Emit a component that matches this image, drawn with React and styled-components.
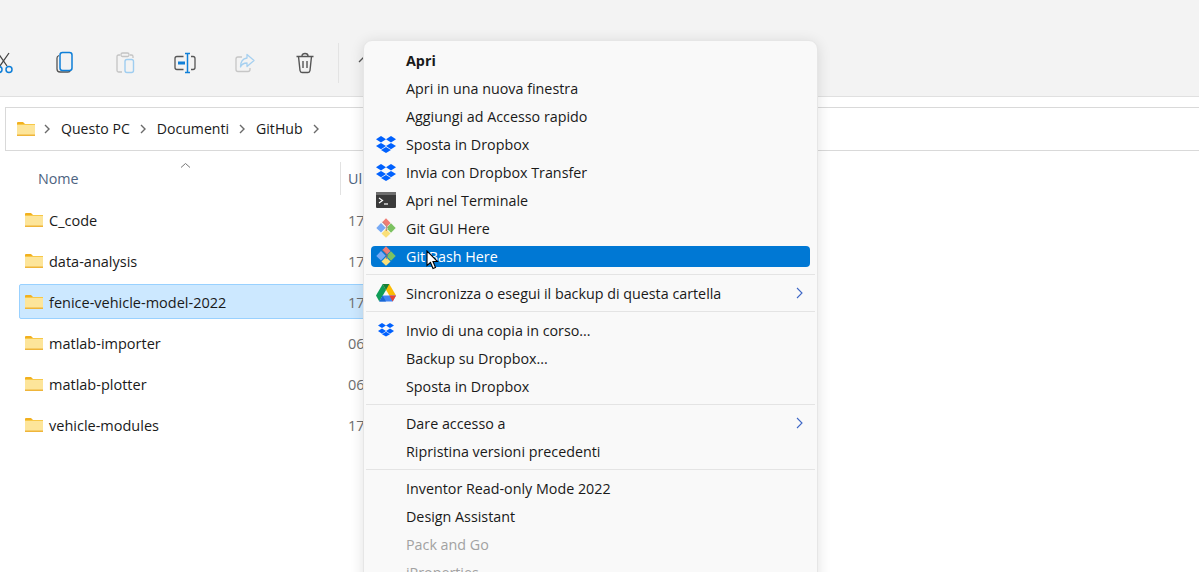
import React from "react";
import styled, { createGlobalStyle } from "styled-components";

const Global = createGlobalStyle`
  html, body { margin: 0; padding: 0; background: #fff; }
  body { font-family: "Open Sans", "Noto Sans", sans-serif; overflow: hidden; }
`;

const Page = styled.div`
  position: relative;
  width: 1199px;
  height: 572px;
  overflow: hidden;
  background: #fff;
  font-size: 14.3px;
  color: #1a1a1a;
`;

const Toolbar = styled.div`
  display: flex;
  align-items: center;
  height: 97px;
  padding-top: 30px;
  box-sizing: border-box;
  background: #f3f3f3;
  border-bottom: 1px solid #e0e0e0;
  margin-bottom: 10px;
`;

const ToolButton = styled.div`
  flex: 0 0 60px;
  width: 60px;
  height: 24px;
  display: flex;
  justify-content: center;
  margin-left: ${({ $first }) => ($first ? "-25px" : "0")};
`;

const ToolDivider = styled.div`
  width: 1px;
  height: 40px;
  margin: 0 19px 0 3px;
  background: #e3e3e3;
`;

const MoreMark = styled.svg`
  margin-bottom: 7px;
`;

const AddressBar = styled.div`
  display: flex;
  align-items: center;
  height: 44px;
  width: 1300px;
  margin-left: 5px;
  padding-left: 11px;
  box-sizing: border-box;
  border: 1px solid #d9d9d9;
  font-size: 14.1px;
`;

const Crumb = styled.span`
  white-space: nowrap;
  margin-bottom: 2px;
`;

const ChevronWrap = styled.span`
  display: flex;
  width: 8px;
  margin: ${({ $m }) => $m || "0 10px 0 9px"};
`;

const HeaderRow = styled.div`
  position: relative;
  display: flex;
  align-items: center;
  height: 44px;
  margin-top: 5px;
  margin-bottom: 2px;
  color: #4d6380;
`;

const HeaderName = styled.div`
  width: 340px;
  padding-left: 38px;
  box-sizing: border-box;
  position: relative;
`;

const SortMark = styled.span`
  position: absolute;
  left: 180px;
  top: -7px;
  display: flex;
`;

const HeaderDivider = styled.div`
  width: 1px;
  height: 33px;
  margin-right: 7px;
  background: #e2e2e2;
`;

const FileList = styled.div`
  display: flex;
  flex-direction: column;
  gap: 6px;
  padding-left: 19px;
  font-size: 14.5px;
`;

const FileRow = styled.div`
  display: flex;
  align-items: center;
  width: 400px;
  height: 35px;
  box-sizing: border-box;
  padding-left: 5px;
  border: 1px solid ${({ $selected }) => ($selected ? "#99d1ff" : "transparent")};
  border-radius: 2px;
  background: ${({ $selected }) => ($selected ? "#cce8ff" : "transparent")};
`;

const FileName = styled.span`
  width: 299px;
  margin-left: 6px;
  padding-top: 2px;
  color: #1a1a1a;
`;

const FileDate = styled.span`
  padding-top: 2px;
  color: #6e6e6e;
`;

const Menu = styled.div`
  position: absolute;
  left: 363px;
  top: 40px;
  width: 455px;
  height: 580px;
  box-sizing: border-box;
  padding-top: 5px;
  background: #f9f9f9;
  border: 1px solid #e6e6e6;
  border-radius: 9px;
  box-shadow: 0 2px 14px rgba(0, 0, 0, 0.12);
`;

const MenuRow = styled.div`
  height: 28px;
  display: flex;
  align-items: center;
  color: ${({ $disabled }) => ($disabled ? "#a2a2a2" : "#1a1a1a")};
  font-weight: ${({ $bold }) => ($bold ? 700 : 400)};
`;

const MenuInner = styled.div`
  position: relative;
  flex: 1;
  height: 21px;
  margin: 0 7px;
  display: flex;
  align-items: center;
  border-radius: 4px;
  background: ${({ $active }) => ($active ? "#0078d4" : "transparent")};
  color: ${({ $active }) => ($active ? "#fff" : "inherit")};
`;

const IconCell = styled.span`
  flex: 0 0 30px;
  width: 30px;
  margin-right: 5px;
  display: flex;
  justify-content: center;
`;

const SubArrow = styled.span`
  position: absolute;
  right: 5px;
  top: 3px;
  display: flex;
`;

const MenuSep = styled.div`
  height: 1px;
  margin: 4px 2px;
  background: #e4e4e4;
`;

const Cursor = styled.svg`
  position: absolute;
  left: 426px;
  top: 250px;
`;

const Folder = () => (
  <svg width="18" height="14" viewBox="0 0 18 14">
    <path d="M0 1Q0 0 1 0H6L8 2V3H0Z" fill="#f2b01e" />
    <rect x="0" y="2" width="18" height="12" rx="1" fill="#fde59a" />
    <rect x="0" y="2" width="18" height="1" fill="#f7c848" />
    <rect x="0" y="12.500" width="18" height="1.500" fill="#efb53a" />
  </svg>
);

const Chevron = () => (
  <svg width="8" height="10" viewBox="0 0 8 10">
    <path d="M2 1l4 4-4 4" fill="none" stroke="#6a6a6a" strokeWidth="1.4" />
  </svg>
);

const Cut = () => (
  <svg width="24" height="24" viewBox="0 0 24 24" fill="none">
    <path d="M5 2l9 13M16 2l-9 13" stroke="#444" strokeWidth="1.3" />
    <circle cx="6" cy="18.5" r="3" stroke="#0f7fd8" strokeWidth="1.5" />
    <circle cx="16" cy="18.5" r="3" stroke="#0f7fd8" strokeWidth="1.5" />
  </svg>
);

const Copy = () => (
  <svg width="24" height="24" viewBox="0 0 24 24" fill="none">
    <path d="M6 4.500C4.600 5 4 5.800 4 7v11c0 2 1.200 3 3 3h8c1 0 2-.5 2.400-1.500" stroke="#555" strokeWidth="1.3" />
    <rect x="7" y="1.500" width="12" height="18" rx="2.500" stroke="#0f7fd8" strokeWidth="1.500" />
  </svg>
);

const Paste = () => (
  <svg width="24" height="24" viewBox="0 0 24 24" fill="none">
    <path d="M7 4H5.500C4.500 4 4 4.700 4 5.500V19.500C4 20.400 4.500 21 5.500 21H9M17 4H18.500C19.500 4 20 4.700 20 5.500V7" stroke="#c4c4c4" strokeWidth="1.300" />
    <rect x="8" y="2" width="8" height="3.500" rx="1.500" stroke="#c4c4c4" strokeWidth="1.300" />
    <rect x="12" y="8.500" width="8.500" height="13" rx="2" stroke="#9fcdf0" strokeWidth="1.400" />
  </svg>
);

const Rename = () => (
  <svg width="24" height="24" viewBox="0 0 24 24" fill="none">
    <path d="M10.500 5.500H4C2.800 5.500 2 6.300 2 7.500V16.500C2 17.700 2.800 18.500 4 18.500H10.500M18 5.500H20C21.200 5.500 22 6.300 22 7.500V16.500C22 17.700 21.200 18.500 20 18.500H18" stroke="#555" strokeWidth="1.300" />
    <path d="M14.500 2V22M12 2.500H17M12 21.500H17" stroke="#0f7fd8" strokeWidth="1.500" />
    <rect x="5" y="10.500" width="7" height="3" fill="#0f7fd8" />
  </svg>
);

const Share = () => (
  <svg width="24" height="24" viewBox="0 0 24 24" fill="none">
    <path d="M9 6H5C3.800 6 3 6.800 3 8V18.500C3 19.700 3.800 20.500 5 20.500H15C16.200 20.500 17 19.700 17 18.500V17" stroke="#c6c6c6" strokeWidth="1.300" />
    <path d="M14 3.500L21 9.500L14 15.500V12C11 12 8.500 13.500 7.500 16C7.500 10.500 10.500 7.500 14 7Z" stroke="#a6d0f0" strokeWidth="1.300" strokeLinejoin="round" />
  </svg>
);

const Trash = () => (
  <svg width="24" height="24" viewBox="0 0 24 24" fill="none" stroke="#555" strokeWidth="1.400">
    <path d="M3.500 5.500H20.500M5.500 5.500L7 19.500C7.200 20.800 8 21.500 9 21.500H15C16 21.500 16.800 20.800 17 19.500L18.500 5.500" />
    <path d="M9 5C9 3.200 10.300 2.500 12 2.500C13.700 2.500 15 3.200 15 5" />
    <path d="M10 10V17M14 10V17" />
  </svg>
);

const Dropbox = ({ size = 20 }) => (
  <svg width={size} height={size * 0.85} viewBox="0 0 20 17" fill="#0061fe">
    <path d="M5 0L10 3.200L5 6.400L0 3.200Z" />
    <path d="M15 0L20 3.200L15 6.400L10 3.200Z" />
    <path d="M5 6.900L10 10.100L5 13.300L0 10.100Z" />
    <path d="M15 6.900L20 10.100L15 13.300L10 10.100Z" />
    <path d="M10 10.900L15 14L10 17L5 14Z" />
  </svg>
);

const TerminalIcon = () => (
  <svg width="20" height="16" viewBox="0 0 20 16">
    <rect width="20" height="16" rx="1" fill="#3b3b3b" />
    <rect width="20" height="3" fill="#6e6e6e" />
    <path d="M3 6l3.500 2.500L3 11" fill="none" stroke="#fff" strokeWidth="1.200" />
    <path d="M8 12h4" stroke="#fff" strokeWidth="1.200" />
  </svg>
);

const GitIcon = () => (
  <svg width="20" height="20" viewBox="0 0 20 20">
    <path d="M10 0.300L14.600 4.900L11 8.500L6.400 3.900Z" fill="#ef7d75" />
    <path d="M5 5L9.700 9.700L5 14.600L0.300 10Z" fill="#77aaf5" />
    <path d="M15 5.300L19.700 10L15 14.700L11.500 11.200V8.800Z" fill="#7cc261" />
    <path d="M10 11L14.500 15.500L10 19.700L5.500 15.500Z" fill="#fadf78" />
    <path d="M6.400 3.900L12 9.800M10.300 8.500V13" stroke="#a5605a" strokeWidth="0.800" fill="none" />
  </svg>
);

const DriveIcon = () => (
  <svg width="20" height="18" viewBox="0 0 20 18">
    <path d="M6.700 0H13.300L20 11.500H13.300Z" fill="#fbbc04" />
    <path d="M6.700 0L0 11.500L3.300 17.500L10 6Z" fill="#0f9d58" />
    <path d="M13.300 0H6.700L10 6L13.300 0Z" fill="#188038" />
    <path d="M6.700 11.500H20L16.700 17.500H3.300Z" fill="#4285f4" />
    <path d="M20 11.500H13.300L16.700 17.500Z" fill="#ea4335" />
    <path d="M6.700 11.500L3.300 17.500H10Z" fill="#1967d2" />
  </svg>
);

const ArrowRight = () => (
  <svg width="10" height="14" viewBox="0 0 10 14">
    <path d="M2 2L7 7L2 12" fill="none" stroke="#3e67c6" strokeWidth="1.100" />
  </svg>
);

const files = [
  { name: "C_code", date: "17" },
  { name: "data-analysis", date: "17" },
  { name: "fenice-vehicle-model-2022", date: "17", selected: true },
  { name: "matlab-importer", date: "06" },
  { name: "matlab-plotter", date: "06" },
  { name: "vehicle-modules", date: "17" },
];

const MenuItem = ({ icon, children, bold, active, disabled, sub }) => (
  <MenuRow $bold={bold} $disabled={disabled}>
    <MenuInner $active={active}>
      <IconCell>{icon}</IconCell>
      {children}
      {sub && (
        <SubArrow>
          <ArrowRight />
        </SubArrow>
      )}
    </MenuInner>
  </MenuRow>
);

export default function App() {
  return (
    <Page>
      <Global />
      <Toolbar>
        <ToolButton $first><Cut /></ToolButton>
        <ToolButton><Copy /></ToolButton>
        <ToolButton><Paste /></ToolButton>
        <ToolButton><Rename /></ToolButton>
        <ToolButton><Share /></ToolButton>
        <ToolButton><Trash /></ToolButton>
        <ToolDivider />
        <MoreMark width="12" height="8" viewBox="0 0 12 8">
          <path d="M1 6l5-5 5 5" fill="none" stroke="#555" strokeWidth="1.300" />
        </MoreMark>
      </Toolbar>

      <AddressBar>
        <Folder />
        <ChevronWrap $m="0 10px 0 8px"><Chevron /></ChevronWrap>
        <Crumb>Questo PC</Crumb>
        <ChevronWrap><Chevron /></ChevronWrap>
        <Crumb>Documenti</Crumb>
        <ChevronWrap><Chevron /></ChevronWrap>
        <Crumb>GitHub</Crumb>
        <ChevronWrap><Chevron /></ChevronWrap>
      </AddressBar>

      <HeaderRow>
        <HeaderName>
          Nome
          <SortMark>
            <svg width="11" height="7" viewBox="0 0 11 7">
              <path d="M1 5.500L5.500 1.500L10 5.500" fill="none" stroke="#777" strokeWidth="1" />
            </svg>
          </SortMark>
        </HeaderName>
        <HeaderDivider />
        <span>Ul</span>
      </HeaderRow>

      <FileList>
        {files.map((f) => (
          <FileRow key={f.name} $selected={f.selected}>
            <Folder />
            <FileName>{f.name}</FileName>
            <FileDate>{f.date}</FileDate>
          </FileRow>
        ))}
      </FileList>

      <Menu>
        <MenuItem bold>Apri</MenuItem>
        <MenuItem>Apri in una nuova finestra</MenuItem>
        <MenuItem>Aggiungi ad Accesso rapido</MenuItem>
        <MenuItem icon={<Dropbox />}>Sposta in Dropbox</MenuItem>
        <MenuItem icon={<Dropbox />}>Invia con Dropbox Transfer</MenuItem>
        <MenuItem icon={<TerminalIcon />}>Apri nel Terminale</MenuItem>
        <MenuItem icon={<GitIcon />}>Git GUI Here</MenuItem>
        <MenuItem icon={<GitIcon />} active>Git Bash Here</MenuItem>
        <MenuSep />
        <MenuItem icon={<DriveIcon />} sub>Sincronizza o esegui il backup di questa cartella</MenuItem>
        <MenuSep />
        <MenuItem icon={<Dropbox size={16} />}>Invio di una copia in corso...</MenuItem>
        <MenuItem>Backup su Dropbox...</MenuItem>
        <MenuItem>Sposta in Dropbox</MenuItem>
        <MenuSep />
        <MenuItem sub>Dare accesso a</MenuItem>
        <MenuItem>Ripristina versioni precedenti</MenuItem>
        <MenuSep />
        <MenuItem>Inventor Read-only Mode 2022</MenuItem>
        <MenuItem>Design Assistant</MenuItem>
        <MenuItem disabled>Pack and Go</MenuItem>
        <MenuItem disabled>iProperties</MenuItem>
      </Menu>

      <Cursor width="13" height="20" viewBox="0 0 13 20">
        <path d="M1 1V15.500L4.500 12.500L7 18.500L9.500 17.500L7 11.500H11.500Z" fill="#fff" stroke="#000" strokeWidth="1.100" />
      </Cursor>
    </Page>
  );
}
